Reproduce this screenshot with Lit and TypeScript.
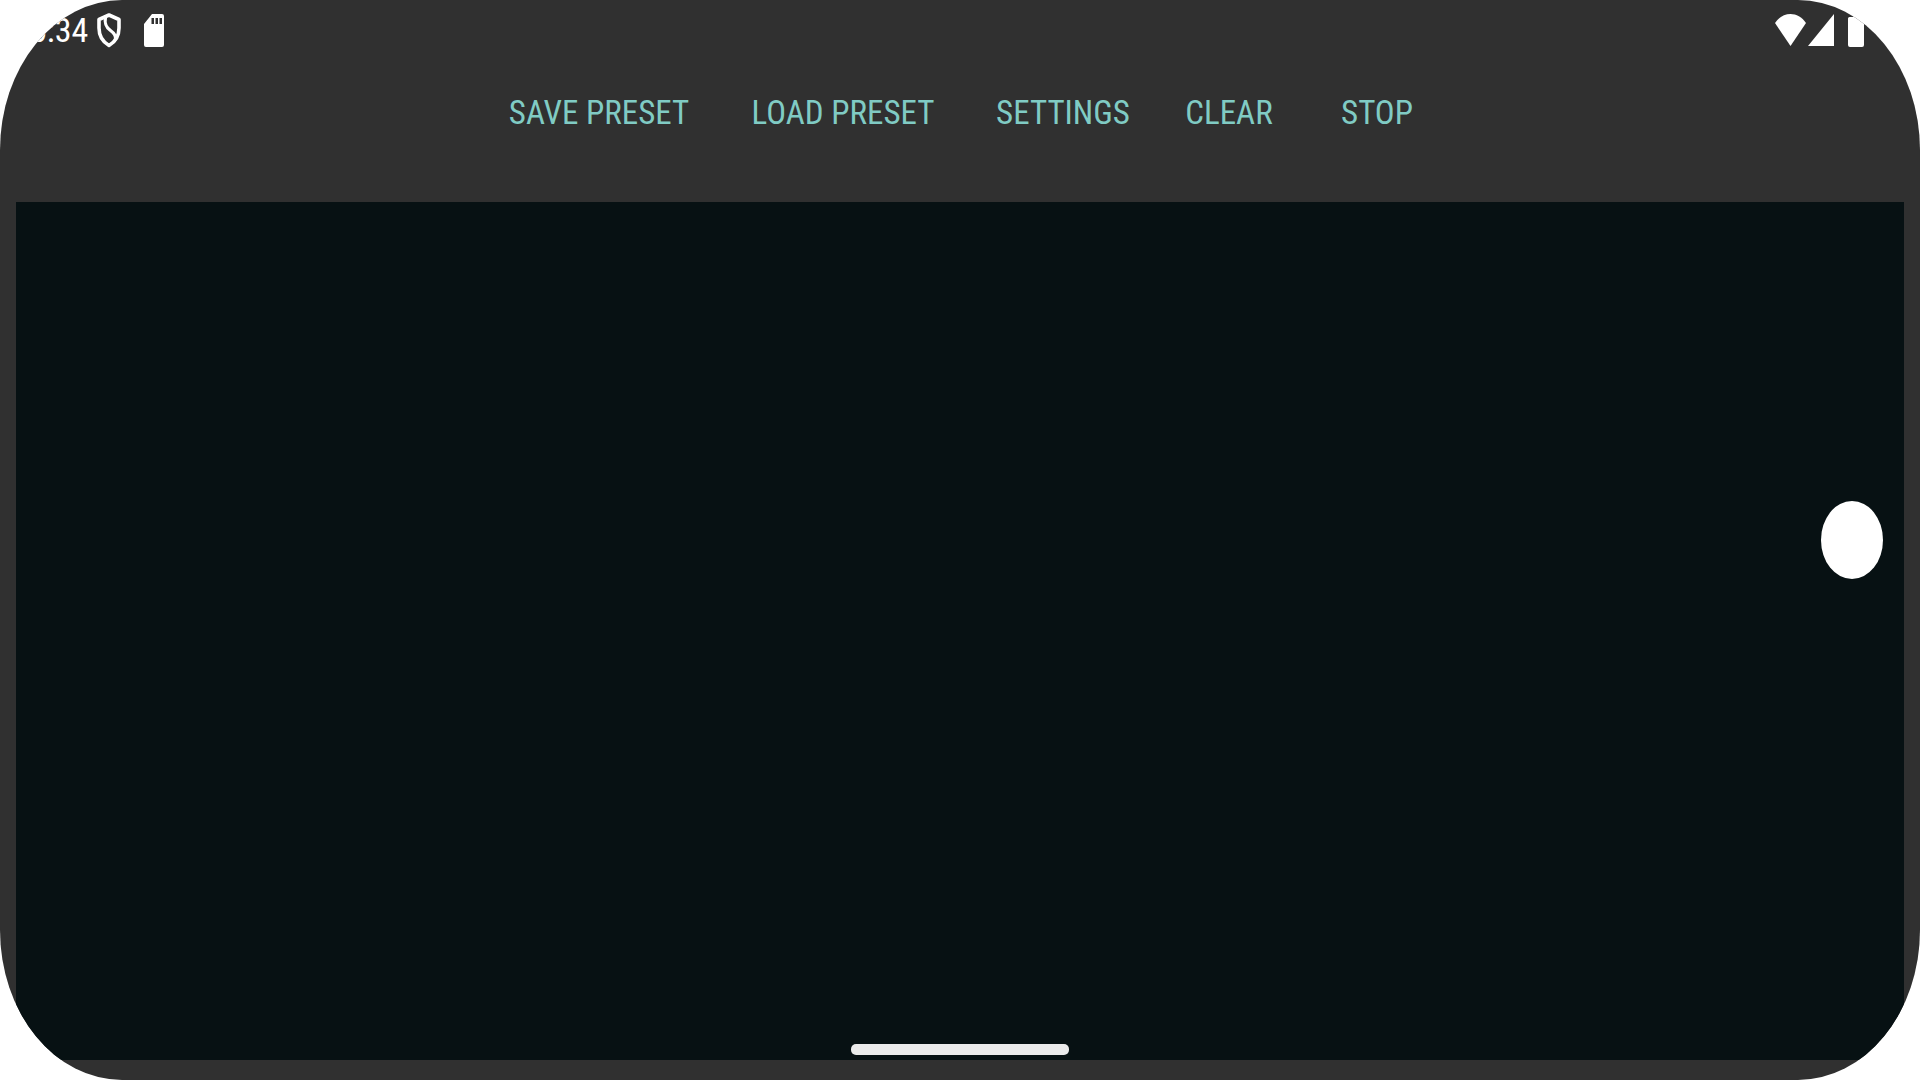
import { LitElement, html, css } from "lit";
import { customElement } from "lit/decorators.js";

@customElement("status-bar")
class StatusBar extends LitElement {
  static styles = css`
    :host {
      display: flex;
      justify-content: space-between;
      align-items: center;
      height: 60px;
      padding: 0 56px 0 30px;
      box-sizing: border-box;
      color: #fff;
    }
    .group {
      display: flex;
      align-items: center;
    }
    .time {
      font-size: 34px;
      line-height: 60px;
      margin-right: 8px;
    }
    svg {
      display: block;
      height: 36px;
      fill: currentColor;
    }
    .shield {
      width: 26px;
      margin-right: 22px;
    }
    .signal {
      margin-right: 14px;
    }
  `;

  render() {
    return html`
      <div class="group">
        <span class="time">6:34</span>
        <svg class="shield" viewBox="0 0 26 36" width="26" aria-hidden="true">
          <path
            d="M13 3 L23 7.500 V16 C23 24 19 30 13 33.500 C7 30 3 24 3 16 V7.500 Z"
            fill="none"
            stroke="currentColor"
            stroke-width="3.600"
            stroke-linejoin="round"
          />
          <path
            d="M9.500 5 C8 13 11 16 14.500 18.500 C18 21 20 23 19.500 27"
            fill="none"
            stroke="currentColor"
            stroke-width="3.200"
          />
        </svg>
        <svg viewBox="0 0 20 36" width="20" aria-hidden="true">
          <path
            fill-rule="evenodd"
            d="M8 2 H18 Q20 2 20 4 V33 Q20 35 18 35 H2 Q0 35 0 33 V12 Z M7.500 6 V12 H10 V6 Z M11.500 6 V12 H14 V6 Z M15.500 6 V12 H18 V6 Z"
          />
        </svg>
      </div>
      <div class="group">
        <svg viewBox="0 0 32 36" width="32" aria-hidden="true">
          <path d="M0 11 C8 -1 23 -1 31 11 L15.500 34 Z" />
        </svg>
        <svg class="signal" viewBox="0 0 27 36" width="27" aria-hidden="true">
          <path d="M27 2 V34 H1 Z" />
        </svg>
        <svg viewBox="0 0 16 36" width="16" aria-hidden="true">
          <path d="M5 1 H11 V5 H14.500 Q16 5 16 6.500 V33 Q16 35 14 35 H2 Q0 35 0 33 V6.500 Q0 5 1.500 5 H5 Z" />
        </svg>
      </div>
    `;
  }
}

@customElement("preset-toolbar")
class PresetToolbar extends LitElement {
  static styles = css`
    :host {
      display: block;
    }
    .bar {
      display: grid;
      grid-template-columns: 244px 244px 196px 136px 160px;
      justify-content: center;
      height: 142px;
      padding: 6px 0 42px 14px;
      box-sizing: border-box;
    }
    button {
      padding: 0;
      border: 0;
      background: none;
      color: #80cbc4;
      font-family: inherit;
      font-size: 33px;
      line-height: 40px;
      text-transform: uppercase;
      white-space: nowrap;
      cursor: pointer;
    }
  `;

  private actions = ["Save preset", "Load preset", "Settings", "Clear", "Stop"];

  render() {
    return html`<nav class="bar">
      ${this.actions.map((name) => html`<button type="button">${name}</button>`)}
    </nav>`;
  }
}

@customElement("app-root")
class AppRoot extends LitElement {
  static styles = css`
    :host {
      display: block;
      background: #fff;
      font-family: "Roboto Condensed", Roboto, sans-serif;
    }
    .screen {
      position: relative;
      display: flex;
      flex-direction: column;
      min-height: 100vh;
      padding-bottom: 20px;
      box-sizing: border-box;
      overflow: hidden;
      border-radius: 122px / 150px;
      background: #303030;
    }
    .canvas {
      flex: 1;
      margin: 0 16px;
      background: #071113;
    }
    .knob {
      position: absolute;
      right: 37px;
      top: calc(50% - 39px);
      width: 62px;
      height: 78px;
      padding: 0;
      border: 0;
      border-radius: 50%;
      background: #fff;
    }
    .home {
      position: absolute;
      left: calc(50% - 109px);
      bottom: 25px;
      width: 218px;
      height: 11px;
      border-radius: 5px;
      background: #ebebeb;
    }
  `;

  render() {
    return html`
      <div class="screen">
        <status-bar></status-bar>
        <preset-toolbar></preset-toolbar>
        <main class="canvas"></main>
        <button class="knob" type="button" aria-label="Sound node"></button>
        <div class="home"></div>
      </div>
    `;
  }
}
